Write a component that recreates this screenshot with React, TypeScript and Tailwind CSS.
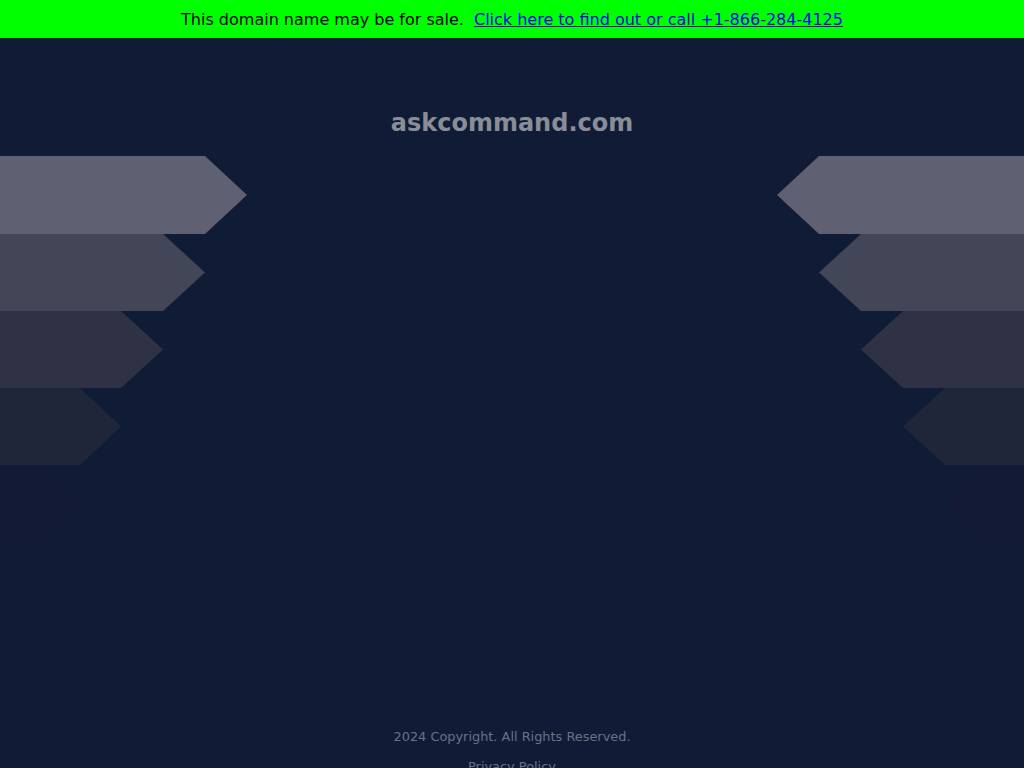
// Parked-domain landing page: sale banner, title, stepped arrow bands, footer.

const bandas = [
  { cor: 'bg-[#5f6172]', h: 'h-[78px]', esq: '[clip-path:polygon(0_0,205px_0,247px_50%,205px_100%,0_100%)]', wE: 'w-[247px]', wD: 'w-[247px]' },
  { cor: 'bg-[#434657]', h: 'h-[77px]', esq: '[clip-path:polygon(0_0,163px_0,205px_50%,163px_100%,0_100%)]', wE: 'w-[205px]', wD: 'w-[205px]' },
  { cor: 'bg-[#2e3244]', h: 'h-[77px]', esq: '[clip-path:polygon(0_0,121px_0,163px_50%,121px_100%,0_100%)]', wE: 'w-[163px]', wD: 'w-[163px]' },
  { cor: 'bg-[#20263a]', h: 'h-[77px]', esq: '[clip-path:polygon(0_0,80px_0,121px_50%,80px_100%,0_100%)]', wE: 'w-[121px]', wD: 'w-[121px]' },
  { cor: 'bg-[#121a35]', h: 'h-[77px]', esq: '[clip-path:polygon(0_0,38px_0,80px_50%,38px_100%,0_100%)]', wE: 'w-[80px]', wD: 'w-[79px]' },
];
const pontaDir = '[clip-path:polygon(42px_0,100%_0,100%_100%,42px_100%,0_50%)]';

export default function App() {
  return (
    <div className="min-h-screen bg-[#101c36] font-['DejaVu_Sans',sans-serif]">
      {/* ── faixa de venda ── */}
      <div className="flex h-[38px] items-center justify-center bg-[#00ff00] pt-[2px] text-base text-black">
        <span>This domain name may be for sale.</span>
        <a href="#" className="ml-[10px] text-[#0000ee] underline">Click here to find out or call +1-866-284-4125</a>
      </div>

      {/* ── título ── */}
      <h1 className="pt-[70px] text-center text-2xl leading-[30px] font-bold text-[#8a8d98]">askcommand.com</h1>

      {/* ── bandas ── */}
      <div className="mt-[18px] flex justify-between">
        <div className="flex flex-col">
          {bandas.map((b, i) => (
            <div key={i} className={`${b.h} ${b.cor} ${b.wE} ${b.esq}`} />
          ))}
        </div>
        <div className="flex flex-col items-end">
          {bandas.map((b, i) => (
            <div key={i} className={`${b.h} ${b.cor} ${b.wD} ${pontaDir}`} />
          ))}
        </div>
      </div>

      {/* ── rodapé ── */}
      <footer className="mt-[186px] pb-6 text-center text-[12.9px] leading-[18px] text-[#6b7184]">
        <p>2024 Copyright. All Rights Reserved.</p>
        <p className="mt-[12px]">Privacy Policy</p>
      </footer>
    </div>
  );
}
